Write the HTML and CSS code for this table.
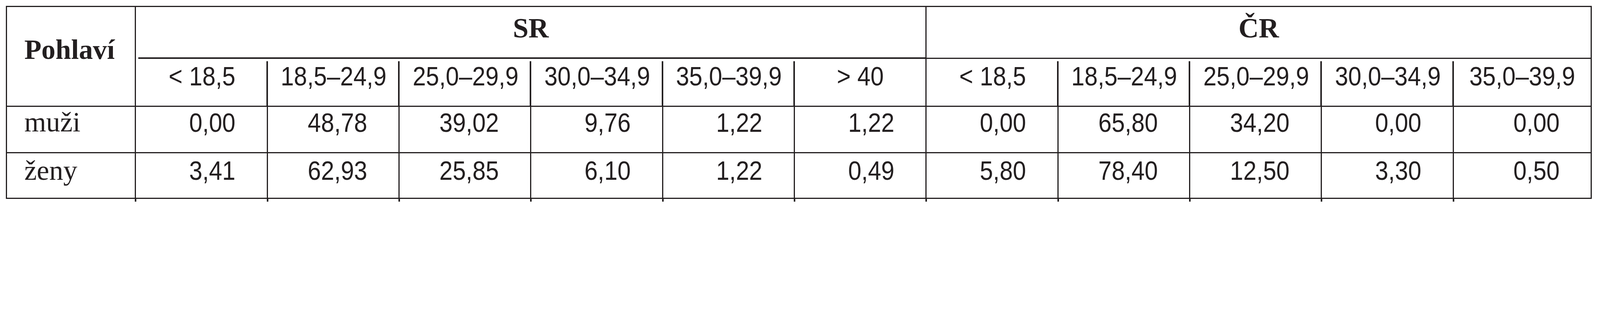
FILE: index.html
```html
<!DOCTYPE html>
<html lang="cs">
<head>
<meta charset="utf-8">
<title>BMI – Pohlaví</title>
<link rel="stylesheet" href="styles.css">
</head>
<body>
<div class="bmi-table">
  <div class="cell head-label">Pohlaví</div>
  <div class="cell group group-sr">SR</div>
  <div class="cell group group-cr">ČR</div>

  <div class="cell sub"><span class="num">&lt; 18,5</span></div>
  <div class="cell sub"><span class="num">18,5–24,9</span></div>
  <div class="cell sub"><span class="num">25,0–29,9</span></div>
  <div class="cell sub"><span class="num">30,0–34,9</span></div>
  <div class="cell sub"><span class="num">35,0–39,9</span></div>
  <div class="cell sub sub-edge"><span class="num">&gt; 40</span></div>
  <div class="cell sub"><span class="num">&lt; 18,5</span></div>
  <div class="cell sub"><span class="num">18,5–24,9</span></div>
  <div class="cell sub"><span class="num">25,0–29,9</span></div>
  <div class="cell sub"><span class="num">30,0–34,9</span></div>
  <div class="cell sub sub-last"><span class="num">35,0–39,9</span></div>

  <div class="cell row-label r1">muži</div>
  <div class="cell val r1"><span class="num">0,00</span></div>
  <div class="cell val r1"><span class="num">48,78</span></div>
  <div class="cell val r1"><span class="num">39,02</span></div>
  <div class="cell val r1"><span class="num">9,76</span></div>
  <div class="cell val r1"><span class="num">1,22</span></div>
  <div class="cell val r1"><span class="num">1,22</span></div>
  <div class="cell val r1"><span class="num">0,00</span></div>
  <div class="cell val r1"><span class="num">65,80</span></div>
  <div class="cell val r1"><span class="num">34,20</span></div>
  <div class="cell val r1"><span class="num">0,00</span></div>
  <div class="cell val r1 last-col"><span class="num">0,00</span></div>

  <div class="cell row-label r2 last-row">ženy</div>
  <div class="cell val r2 last-row"><span class="num">3,41</span></div>
  <div class="cell val r2 last-row"><span class="num">62,93</span></div>
  <div class="cell val r2 last-row"><span class="num">25,85</span></div>
  <div class="cell val r2 last-row"><span class="num">6,10</span></div>
  <div class="cell val r2 last-row"><span class="num">1,22</span></div>
  <div class="cell val r2 last-row"><span class="num">0,49</span></div>
  <div class="cell val r2 last-row"><span class="num">5,80</span></div>
  <div class="cell val r2 last-row"><span class="num">78,40</span></div>
  <div class="cell val r2 last-row"><span class="num">12,50</span></div>
  <div class="cell val r2 last-row"><span class="num">3,30</span></div>
  <div class="cell val r2 last-row last-col"><span class="num">0,50</span></div>
</div>
</body>
</html>
```

FILE: styles.css
```css
/* 1 unit = one pixel of the 6156px-wide reference, whatever the device pixel ratio */
:root {
  --ink: #231f20;
  --u: calc(100vw / 6156);
  --rule: calc(6 * var(--u));
}

html {
  overflow: hidden;
}

html,
body {
  margin: 0;
  background: #ffffff;
}

body {
  padding: calc(23 * var(--u));
}

.bmi-table {
  display: grid;
  width: calc(6102 * var(--u));
  box-sizing: border-box;
  border: var(--rule) solid var(--ink);
  grid-template-columns: calc(496 * var(--u)) repeat(10, calc(507 * var(--u))) 1fr;
  grid-template-rows: calc(200 * var(--u)) calc(185 * var(--u)) calc(178 * var(--u)) calc(171 * var(--u));
  color: var(--ink);
}

.cell {
  box-sizing: border-box;
  min-width: 0;
  white-space: nowrap;
  border-right: var(--rule) solid var(--ink);
  border-bottom: var(--rule) solid var(--ink);
  font-family: "Liberation Sans", Arial, sans-serif;
  font-size: calc(104 * var(--u));
  line-height: calc(104 * var(--u));
}

/* header: Pohlaví */
.head-label {
  grid-row: 1 / span 2;
  font-family: "Liberation Serif", "Times New Roman", serif;
  font-weight: 700;
  font-size: calc(108 * var(--u));
  line-height: calc(108 * var(--u));
  padding: calc(111 * var(--u)) 0 0 calc(66 * var(--u));
}

/* header: SR / ČR groups */
.group {
  font-family: "Liberation Serif", "Times New Roman", serif;
  font-weight: 700;
  font-size: calc(108 * var(--u));
  line-height: calc(108 * var(--u));
  text-align: center;
  padding-top: calc(28 * var(--u));
}

.group-sr {
  grid-column: span 6;
  border-bottom: 0;
  background: linear-gradient(var(--ink), var(--ink)) calc(8 * var(--u)) 100% / calc(100% - 8 * var(--u)) var(--rule) no-repeat;
}

.group-cr {
  grid-column: span 5;
  border-right: 0;
}

/* header: BMI ranges */
.sub {
  text-align: center;
  padding-top: calc(15 * var(--u));
  border-right: 0;
  background: linear-gradient(var(--ink), var(--ink)) 100% 100% / var(--rule) calc(100% - 8 * var(--u)) no-repeat;
}

.sub .num {
  transform-origin: 50% 50%;
}

.sub-edge {
  border-right: var(--rule) solid var(--ink);
  background: none;
}

.sub-last {
  background: none;
}

/* body rows */
.row-label {
  font-family: "Liberation Serif", "Times New Roman", serif;
  font-size: calc(108 * var(--u));
  line-height: calc(108 * var(--u));
  padding-left: calc(66 * var(--u));
}

.row-label.r1 {
  padding-top: calc(6 * var(--u));
}

.row-label.r2 {
  padding-top: calc(13 * var(--u));
}

.val {
  text-align: right;
  padding-right: calc(120 * var(--u));
}

.val.r1 {
  padding-top: calc(8 * var(--u));
}

.val.r2 {
  padding-top: calc(15 * var(--u));
}

.num {
  display: inline-block;
  transform: scaleX(0.88);
  transform-origin: 100% 50%;
}

.last-col {
  border-right: 0;
}

.last-row {
  border-bottom: 0;
  position: relative;
}

/* vertical rules run slightly past the bottom frame */
.last-row::after {
  content: "";
  position: absolute;
  top: 100%;
  right: calc(-6 * var(--u));
  width: var(--rule);
  height: calc(15 * var(--u));
  background: var(--ink);
}

.last-row.last-col::after {
  content: none;
}
```
